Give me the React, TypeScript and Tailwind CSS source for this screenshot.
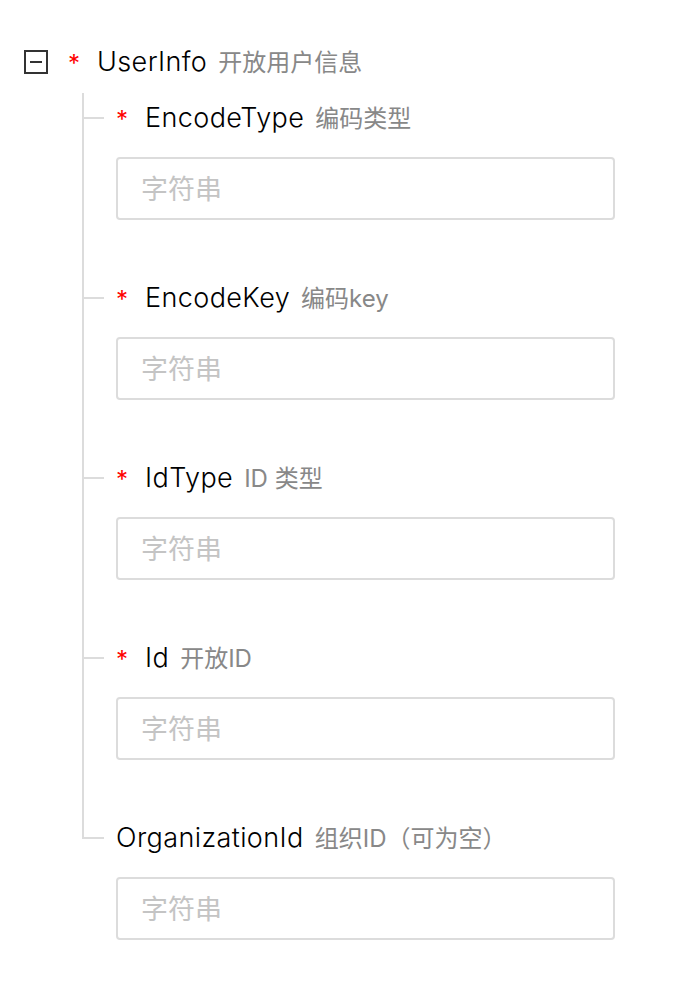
import React from "react";

interface Field {
  name: string;
  desc: string;
  required: boolean;
}

const fields: Field[] = [
  { name: "EncodeType", desc: "编码类型", required: true },
  { name: "EncodeKey", desc: "编码key", required: true },
  { name: "IdType", desc: "ID 类型", required: true },
  { name: "Id", desc: "开放ID", required: true },
  { name: "OrganizationId", desc: "组织ID（可为空）", required: false },
];

const font = { fontFamily: 'Inter, "Noto Sans CJK SC", sans-serif' };

function Label({ field }: { field: Field }) {
  return (
    <div className="h-[50px] flex items-center">
      {field.required && (
        <span className="text-[#ff0000] text-[24px] w-[29px] leading-none pt-[4px]">*</span>
      )}
      <div className="flex items-baseline gap-[11px]">
        <span className="text-[27px] tracking-[0.4px] text-black font-light">{field.name}</span>
        <span className="text-[24px] text-[#888888]">{field.desc}</span>
      </div>
    </div>
  );
}

function Row({ field, last }: { field: Field; last: boolean }) {
  return (
    <div className="flex">
      {last ? (
        <div className="w-[34px] shrink-0">
          <div className="w-[22px] h-[26px] border-l-2 border-b-2 border-[#dcdcdc]" />
        </div>
      ) : (
        <div className="w-[34px] shrink-0 border-l-2 border-[#dcdcdc]">
          <div className="mt-[24px] w-[20px] h-[2px] bg-[#dcdcdc]" />
        </div>
      )}
      <div className={last ? "pb-[52px]" : "pb-[53px]"}>
        <Label field={field} />
        <div className="mt-[14px] w-[499px] h-[63px] border-2 border-[#dcdcdc] rounded-[4px] flex items-center px-[23px] pt-[3px]">
          <span className="text-[27px] text-[#c4c4c4]">字符串</span>
        </div>
      </div>
    </div>
  );
}

export default function App() {
  return (
    <div className="min-h-[992px] bg-white pt-[37px]" style={font}>
      {/* root node */}
      <div className="h-[50px] flex items-center pl-[24px]">
        <div className="w-[24px] h-[24px] border-2 border-[#333333] flex items-center justify-center">
          <div className="w-[12px] h-[2px] bg-[#333333]" />
        </div>
        <span className="ml-[20px] text-[#ff0000] text-[24px] w-[29px] leading-none pt-[4px]">*</span>
        <div className="flex items-baseline gap-[11px]">
          <span className="text-[27px] tracking-[0.4px] text-black font-light">UserInfo</span>
          <span className="text-[24px] text-[#888888]">开放用户信息</span>
        </div>
      </div>

      {/* children */}
      <div className="mt-[6px] ml-[82px]">
        {fields.map((f, i) => (
          <Row key={f.name} field={f} last={i === fields.length - 1} />
        ))}
      </div>
    </div>
  );
}
